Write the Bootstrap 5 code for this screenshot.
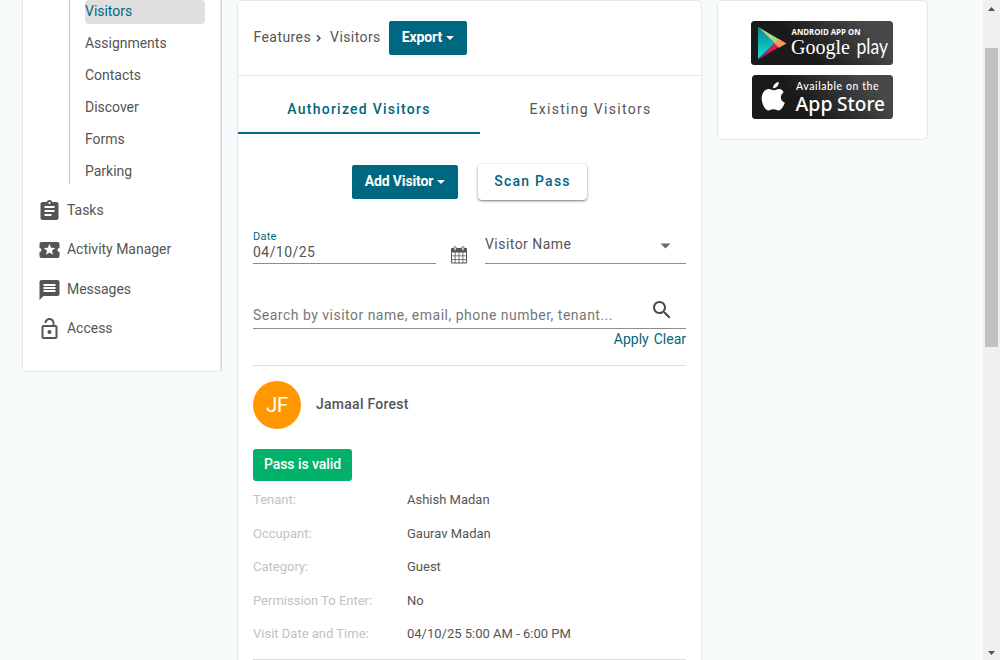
<!DOCTYPE html>
<html lang="en">
<head>
<meta charset="utf-8">
<meta name="viewport" content="width=device-width, initial-scale=1">
<title>Visitors</title>
<link href="https://cdn.jsdelivr.net/npm/bootstrap@5.3.0/dist/css/bootstrap.min.css" rel="stylesheet">
<style>
:root{--teal:#006780;--ink:#555;--edge:#e6e8e8}
body{background:#f6fafb;font-family:Roboto,sans-serif;font-size:14px;line-height:20px;color:var(--ink);height:660px;overflow:hidden}
a{text-decoration:none;color:inherit}
svg{display:block;flex:none}
.page{height:660px;padding-left:22px;overflow:hidden}
.side{width:200px;height:372px;border-right:1px solid #d8d8d8}
.side-box{width:199px;height:372px;border:1px solid var(--edge);border-top:0;border-radius:0 0 5px 5px;background:#fff;padding-left:16px;letter-spacing:-.02px}
.subnav{margin-left:30px;border-left:1px solid #c3c3c3;height:184px;padding-left:15px}
.subnav a{display:block;width:120px;height:24px;line-height:23px;margin-bottom:8px;border-radius:4px}
.subnav a.current{background:#dfdfdf;color:var(--teal)}
.mainnav{padding-top:6.3px}
.mainnav a{height:39.3px;gap:7px}
.mainnav svg{width:21px;height:24px;margin-top:2.5px}
.main-col{width:465px;height:680px;margin-left:15px;border:1px solid var(--edge);border-radius:5px;background:#fff}
.crumbs{height:75px;padding-left:15.5px;border-bottom:1px solid var(--edge);letter-spacing:.42px}
.crumbs a{padding-bottom:2px}
.btn-teal{--bs-btn-bg:#006780;--bs-btn-color:#fff;--bs-btn-border-color:#006780;--bs-btn-hover-bg:#00566b;--bs-btn-hover-color:#fff;border-radius:2px;font-size:14px;font-weight:700;line-height:20px;height:34px;padding:5px 12px 7px;letter-spacing:-.12px}
.btn-teal::after{border-top-width:4px;border-left-width:4px;border-right-width:4px;margin-left:4px;vertical-align:2px}
.btn-export{width:78px}
.btn-add{width:106px;padding-left:11px;padding-right:11px}
.tabbar{height:58px;letter-spacing:1.25px;font-weight:500}
.tabbar a{height:58px;line-height:66px;text-align:center}
.tabbar a:first-child{width:242px;color:var(--teal);border-bottom:2px solid var(--teal)}
.tabbar a:last-child{width:221px;font-weight:400;letter-spacing:1.3px}
.actions{height:67px;padding:29px 0 0 114px;gap:20px}
.btn-scan{width:109px;height:36px;border-radius:4px;background:#fff;color:var(--teal);font-size:14px;font-weight:500;letter-spacing:1.25px;line-height:20px;padding:5px 0 7px;border:0;box-shadow:0 1px 3px rgba(0,0,0,.4),0 1px 1px rgba(0,0,0,.18)}
.body-pad{padding:0 15px}
.filters{height:63px}
.filters-search{height:65px}
.field{border-bottom:1px solid #8c8c8c;letter-spacing:.45px}
.field-date{width:183px;height:35px;padding-top:0}
.field-date label{display:block;font-size:11px;line-height:15px;color:var(--teal);letter-spacing:.25px}
.field-date span{display:block;line-height:17px}
.date-icon{margin-left:14.500px}
.field-name{width:201px;height:35px;padding:0 15.5px 5px 0}
.search-field{height:31px;color:#777;padding:0 12px 0 0;letter-spacing:.49px}
.search-field span{padding-top:7px}
.links{height:37px;color:var(--teal);gap:5px;border-bottom:1px solid #dcdcdc}
.person{height:78px;gap:15px;font-weight:500;letter-spacing:.26px}
.person span{padding-bottom:2px}
.avatar{width:48px;height:48px;background:#ff9800;color:#fff;font-size:20px;font-weight:400;letter-spacing:-.2px}
.pass{width:99px;height:32px;background:#02b26a;color:#fff;border-radius:3px;font-weight:500;line-height:30px;text-align:center;margin-top:5px;letter-spacing:-.06px}
.details{font-size:13px;line-height:20px;padding-top:2px;border-bottom:1px solid #dcdcdc;height:179px}
.details div{height:33.5px;padding-top:7px}
.details dt{width:154px;font-weight:400;color:#c2c2c2}
.details dd{margin:0}
.apps{width:211px;height:140px;margin-left:15px;border:1px solid var(--edge);border-radius:5px;background:#fff;padding:20px 0 0 33px}
.scroller{width:17px;height:660px;background:#f0f0f0;padding:0 2px}
.scroller i{display:block;width:13px;height:299px;background:#c1c1c1}
</style>
</head>
<body>
<div class="page d-flex align-items-start">
  <aside class="side flex-shrink-0">
    <div class="side-box">
      <nav class="subnav">
        <a class="current" href="#">Visitors</a>
        <a href="#">Assignments</a>
        <a href="#">Contacts</a>
        <a href="#">Discover</a>
        <a href="#">Forms</a>
        <a href="#">Parking</a>
      </nav>
      <nav class="mainnav">
        <a href="#" class="d-flex align-items-center"><svg viewBox="1.5 0 21 24" fill="#555"><path d="M19 3h-4.18C14.4 1.84 13.3 1 12 1c-1.3 0-2.400.84-2.820 2H5c-1.100 0-2 .9-2 2v14c0 1.100.9 2 2 2h14c1.100 0 2-.9 2-2V5c0-1.100-.9-2-2-2zm-7 0c.55 0 1 .45 1 1s-.45 1-1 1-1-.45-1-1 .45-1 1-1zm2 14H7v-2h7v2zm3-4H7v-2h10v2zm0-4H7V7h10v2z"/></svg>Tasks</a>
        <a href="#" class="d-flex align-items-center"><svg viewBox="1.500 0 21 24" fill="#555"><path d="M20 12c0-1.100.9-2 2-2V6c0-1.100-.9-2-2-2H4c-1.100 0-1.990.9-1.990 2v4c1.100 0 1.990.9 1.990 2s-.89 2-2 2v4c0 1.100.9 2 2 2h16c1.100 0 2-.9 2-2v-4c-1.100 0-2-.9-2-2zm-4.420 4.800L12 14.500l-3.580 2.300 1.080-4.120-3.290-2.690 4.240-.25L12 5.800l1.540 3.950 4.240.25-3.290 2.690 1.090 4.110z"/></svg>Activity Manager</a>
        <a href="#" class="d-flex align-items-center"><svg viewBox="1.500 0 21 24" fill="#555"><path d="M20 2H4c-1.100 0-1.990.9-1.990 2L2 22l4-4h14c1.100 0 2-.9 2-2V4c0-1.100-.9-2-2-2zm-2 12H6v-2h12v2zm0-3H6V9h12v2zm0-3H6V6h12v2z"/></svg>Messages</a>
        <a href="#" class="d-flex align-items-center"><svg viewBox="1.500 0 21 24" fill="#555"><path d="M12 17c1.100 0 2-.9 2-2s-.9-2-2-2-2 .9-2 2 .9 2 2 2zm6-9h-1V6c0-2.760-2.240-5-5-5S7 3.240 7 6h1.900c0-1.710 1.390-3.100 3.100-3.100 1.710 0 3.100 1.390 3.100 3.100v2H6c-1.100 0-2 .9-2 2v10c0 1.100.9 2 2 2h12c1.100 0 2-.9 2-2V10c0-1.100-.9-2-2-2zm0 12H6V10h12v10z"/></svg>Access</a>
      </nav>
    </div>
  </aside>

  <main class="main-col flex-shrink-0">
    <div class="crumbs d-flex align-items-center">
      <a href="#">Features</a>
      <svg class="mx-1" width="11" height="8" viewBox="0 0 11 8" fill="none" stroke="#444" stroke-width="1.400"><path d="M2 1.300L5 4.300 2 7.300"/></svg>
      <a href="#">Visitors</a>
      <button class="btn btn-teal btn-export dropdown-toggle ms-2" type="button">Export</button>
    </div>
    <nav class="tabbar d-flex">
      <a href="#">Authorized Visitors</a>
      <a href="#">Existing Visitors</a>
    </nav>
    <div class="actions d-flex align-items-center pb-0">
      <button class="btn btn-teal btn-add dropdown-toggle text-nowrap" type="button">Add Visitor</button>
      <button class="btn btn-scan" type="button">Scan Pass</button>
    </div>
    <div class="body-pad">
      <div class="filters d-flex align-items-end">
        <div class="field field-date"><label>Date</label><span>04/10/25</span></div>
        <svg class="date-icon me-auto" width="16" height="18" viewBox="0 0 16 18"><path fill="#555" d="M1 2h14a1 1 0 0 1 1 1v13.500a1 1 0 0 1-1 1H1a1 1 0 0 1-1-1V3a1 1 0 0 1 1-1z"/><path fill="#fff" d="M1 6.500h2.700v2.900H1zm3.500 0h3.100v2.900H4.500zm3.900 0h3.100v2.900H8.400zm3.900 0H15v2.900h-2.700zM1 10.200h2.700V13H1zm3.500 0h3.100V13H4.500zm3.900 0h3.100V13H8.400zm3.900 0H15V13h-2.700zM1 13.800h2.700v2.700H1zm3.500 0h3.100v2.700H4.500zm3.900 0h3.100v2.700H8.400zm3.900 0H15v2.700h-2.700z"/><rect x="3" y=".6" width="2.200" height="4" rx="1.100" fill="#fff" stroke="#555" stroke-width=".9"/><rect x="10.800" y=".6" width="2.200" height="4" rx="1.100" fill="#fff" stroke="#555" stroke-width=".9"/></svg>
        <div class="field field-name d-flex align-items-center justify-content-between">Visitor Name<svg class="mt-1" width="11" height="6" viewBox="0 0 11 6"><path d="M.5.500h10L5.500 5.500z" fill="#6b6b6b"/></svg></div>
      </div>
      <div class="filters filters-search d-flex align-items-end">
        <div class="field search-field w-100 d-flex justify-content-between"><span>Search by visitor name, email, phone number, tenant...</span><svg width="24" height="24" viewBox="0 0 24 24" fill="#4a4a4a"><path d="M15.500 14h-.79l-.28-.27C15.410 12.590 16 11.110 16 9.500 16 5.910 13.090 3 9.500 3S3 5.910 3 9.500 5.910 16 9.500 16c1.610 0 3.090-.59 4.230-1.570l.27.28v.79l5 4.990L20.490 19l-4.990-5zm-6 0C7.010 14 5 11.990 5 9.500S7.010 5 9.500 5 14 7.010 14 9.500 11.990 14 9.500 14z"/></svg></div>
      </div>
      <div class="links d-flex justify-content-end"><a href="#">Apply</a><a href="#">Clear</a></div>
      <div class="person d-flex align-items-center"><div class="avatar rounded-circle d-flex align-items-center justify-content-center">JF</div><span>Jamaal Forest</span></div>
      <div class="pass">Pass is valid</div>
      <dl class="details mb-0">
        <div class="d-flex"><dt>Tenant:</dt><dd>Ashish Madan</dd></div>
        <div class="d-flex"><dt>Occupant:</dt><dd>Gaurav Madan</dd></div>
        <div class="d-flex"><dt>Category:</dt><dd>Guest</dd></div>
        <div class="d-flex"><dt>Permission To Enter:</dt><dd>No</dd></div>
        <div class="d-flex"><dt>Visit Date and Time:</dt><dd>04/10/25 5:00 AM - 6:00 PM</dd></div>
      </dl>
    </div>
  </main>

  <aside class="apps flex-shrink-0">
    <svg width="142" height="44" viewBox="0 0 142 44">
      <defs>
        <linearGradient id="dark" x1="0" y1=".3" x2="1" y2="0"><stop offset=".25" stop-color="#1a1a1a"/><stop offset=".8" stop-color="#484848"/></linearGradient>
        <linearGradient id="cyan" x1="0" y1="0" x2="0" y2="1"><stop offset="0" stop-color="#08879b"/><stop offset="1" stop-color="#10e0ce"/></linearGradient>
      </defs>
      <rect width="142" height="44" rx="3.500" fill="url(#dark)"/>
      <path d="M7 6l17 16.500L7 38z" fill="url(#cyan)"/>
      <path d="M7 6l21.500 12.500-4.500 4z" fill="#a4d78e"/>
      <path d="M7 38.500L23.500 22l4.500 4z" fill="#e0184f"/>
      <path d="M7 38.500l8-8 4 1z" fill="#a1228b"/>
      <path d="M28 18l7.500 4.500-7.500 4.200-4.500-4.200z" fill="#fb9560"/>
      <g fill="#fff"><text x="40.500" y="14" font-family="Open Sans,sans-serif" font-weight="700" font-size="8.500" textLength="69" lengthAdjust="spacingAndGlyphs">ANDROID APP ON</text>
      <text x="40" y="33" font-family="Liberation Serif,serif" font-size="21.500" textLength="59" lengthAdjust="spacingAndGlyphs">Google</text>
      <text x="105.500" y="33" font-family="Lato,sans-serif" font-size="21" textLength="31.500" lengthAdjust="spacingAndGlyphs">play</text></g>
    </svg>
    <svg width="141" height="44" viewBox="0 0 141 44" style="margin:10px 0 0 1px">
      <rect width="141" height="44" rx="3.500" fill="url(#dark)"/>
      <path fill="#fff" d="M26.800 7c.3 3-2.500 6.300-5.700 6.200C20.800 10.200 23.700 7.200 26.800 7zM31.600 17.400c-4.200 2.700-3.500 8.400 1.200 10.400-1 2.900-3.200 7.200-5.900 7.600-2.100.2-2.900-1.200-5.300-1.200s-3.300 1.200-5.200 1.200C12.900 35.300 9.700 28.600 9.700 23.200c0-5.700 3.500-9.100 7.100-9.200 2.100 0 3.500 1.300 5 1.300 1.400 0 3.300-1.500 5.700-1.400 1.900.1 3.400 1.200 4.100 3.500z"/>
      <g fill="#fff"><text x="44" y="15" font-family="Lato,sans-serif" font-weight="500" font-size="10.500" textLength="82.500" lengthAdjust="spacing">Available on the</text>
      <g font-family="Noto Sans,sans-serif" font-weight="500" font-size="20"><text x="43.500" y="35.500" textLength="37" lengthAdjust="spacingAndGlyphs">App</text>
      <text x="85" y="35.500" textLength="48" lengthAdjust="spacingAndGlyphs">Store</text></g></g>
    </svg>
  </aside>

  <div class="scroller ms-auto flex-shrink-0 d-flex flex-column justify-content-between">
    <svg width="13" height="48" viewBox="0 0 13 48"><path d="M3 11l3.500-4 3.500 4z" fill="#505050"/></svg>
    <i></i>
    <svg class="mt-auto" width="13" height="14" viewBox="0 0 13 14"><path d="M3 5h7L6.500 9z" fill="#505050"/></svg>
  </div>
</div>
<script src="https://cdn.jsdelivr.net/npm/bootstrap@5.3.0/dist/js/bootstrap.bundle.min.js"></script>
</body>
</html>
